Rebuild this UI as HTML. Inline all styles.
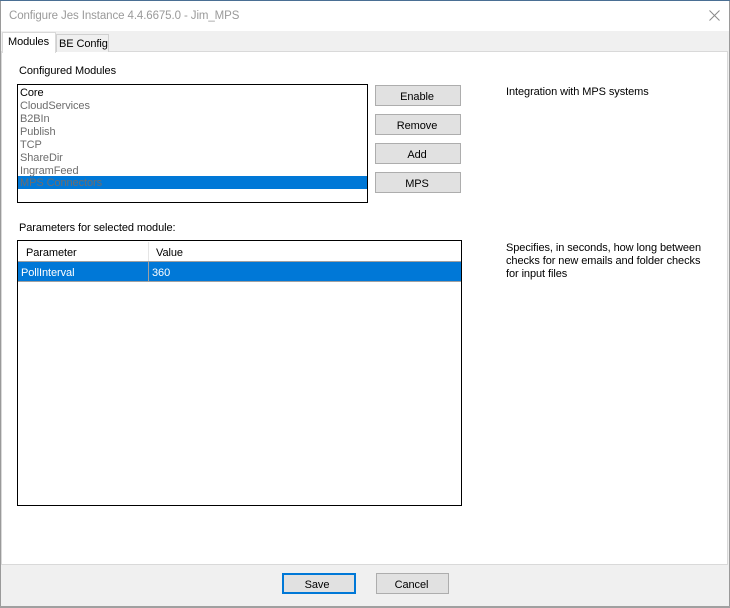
<!DOCTYPE html>
<html><head><meta charset="utf-8"><style>
html,body{margin:0;padding:0}
body{width:730px;height:608px;position:relative;overflow:hidden;background:#f0f0f0;font-family:"Liberation Sans",sans-serif;font-size:11px;letter-spacing:-0.08px;color:#000}
div{position:absolute;box-sizing:border-box}
.t{white-space:nowrap;line-height:13px;height:13px}
.g{color:#6d6d6d}
.b{background:#e1e1e1;border:1px solid #adadad;text-align:center;line-height:22px;padding-right:2px}
</style></head><body>
<div style="left:0;top:0;width:730px;height:1px;background:#4a6f94"></div>
<div style="left:0;top:1px;width:1px;height:607px;background:#9a9a9a"></div>
<div style="left:729px;top:1px;width:1px;height:607px;background:#9a9a9a"></div>
<div style="left:1px;top:1px;width:728px;height:30px;background:#fff"></div>
<div class="t" style="left:9px;top:9px;font-size:11.5px;letter-spacing:-0.1px;line-height:14px;height:14px;color:#9a9a9a">Configure Jes Instance 4.4.6675.0 - Jim_MPS</div>
<svg style="position:absolute;left:709px;top:10px" width="11" height="11"><path d="M0.5 0.5L10.5 10.5M10.5 0.5L0.5 10.5" stroke="#8a8a8a" fill="none"/></svg>

<div style="left:1px;top:51px;width:727px;height:514px;background:#fff;border:1px solid #d9d9d9"></div>
<div style="left:56px;top:34px;width:53px;height:18px;background:#f0f0f0;border:1px solid #d0d0d0;border-bottom:none"></div>
<div style="left:2px;top:32px;width:54px;height:21px;background:#fff;border:1px solid #d9d9d9;border-bottom:none"></div>
<div class="t" style="left:8px;top:36px">Modules</div>
<div class="t" style="left:59px;top:38px">BE Config</div>

<div class="t" style="left:19px;top:65px">Configured Modules</div>
<div style="left:17px;top:84px;width:351px;height:119px;background:#fff;border:1px solid #000"></div>
<div style="left:18px;top:176px;width:349px;height:13px;background:#0078d7"></div>
<div class="t" style="left:20px;top:87px">Core</div>
<div class="t g" style="left:20px;top:100px">CloudServices</div>
<div class="t g" style="left:20px;top:113px">B2BIn</div>
<div class="t g" style="left:20px;top:126px">Publish</div>
<div class="t g" style="left:20px;top:139px">TCP</div>
<div class="t g" style="left:20px;top:152px">ShareDir</div>
<div class="t g" style="left:20px;top:165px">IngramFeed</div>
<div class="t g" style="left:20px;top:177px">MPS Connectors</div>

<div class="b" style="left:375px;top:85px;width:86px;height:21px">Enable</div>
<div class="b" style="left:375px;top:114px;width:86px;height:21px">Remove</div>
<div class="b" style="left:375px;top:143px;width:86px;height:21px">Add</div>
<div class="b" style="left:375px;top:172px;width:86px;height:21px">MPS</div>

<div class="t" style="left:506px;top:86px">Integration with MPS systems</div>

<div class="t" style="left:19px;top:222px">Parameters for selected module:</div>
<div style="left:17px;top:240px;width:445px;height:266px;background:#fff;border:1px solid #000"></div>
<div style="left:148px;top:242px;width:1px;height:19px;background:#e5e5e5"></div>
<div class="t" style="left:26px;top:247px">Parameter</div>
<div class="t" style="left:156px;top:247px">Value</div>
<div style="left:18px;top:261px;width:443px;height:21px;background:#0078d7;border-top:1px solid #a0a0a0;border-bottom:1px solid #a0a0a0"></div>
<div style="left:148px;top:261px;width:1px;height:21px;background:#a0a0a0"></div>
<div class="t" style="left:21px;top:267px;color:#fff">PollInterval</div>
<div class="t" style="left:152px;top:267px;color:#fff">360</div>

<div class="t" style="left:506px;top:242px">Specifies, in seconds, how long between</div>
<div class="t" style="left:506px;top:255px">checks for new emails and folder checks</div>
<div class="t" style="left:506px;top:268px">for input files</div>

<div class="b" style="left:282px;top:573px;width:74px;height:21px;border:2px solid #0078d7;line-height:20px;padding-right:4px">Save</div>
<div class="b" style="left:376px;top:573px;width:73px;height:21px">Cancel</div>
<div style="left:0;top:606px;width:730px;height:2px;background:#a0a0a0"></div>
</body></html>
